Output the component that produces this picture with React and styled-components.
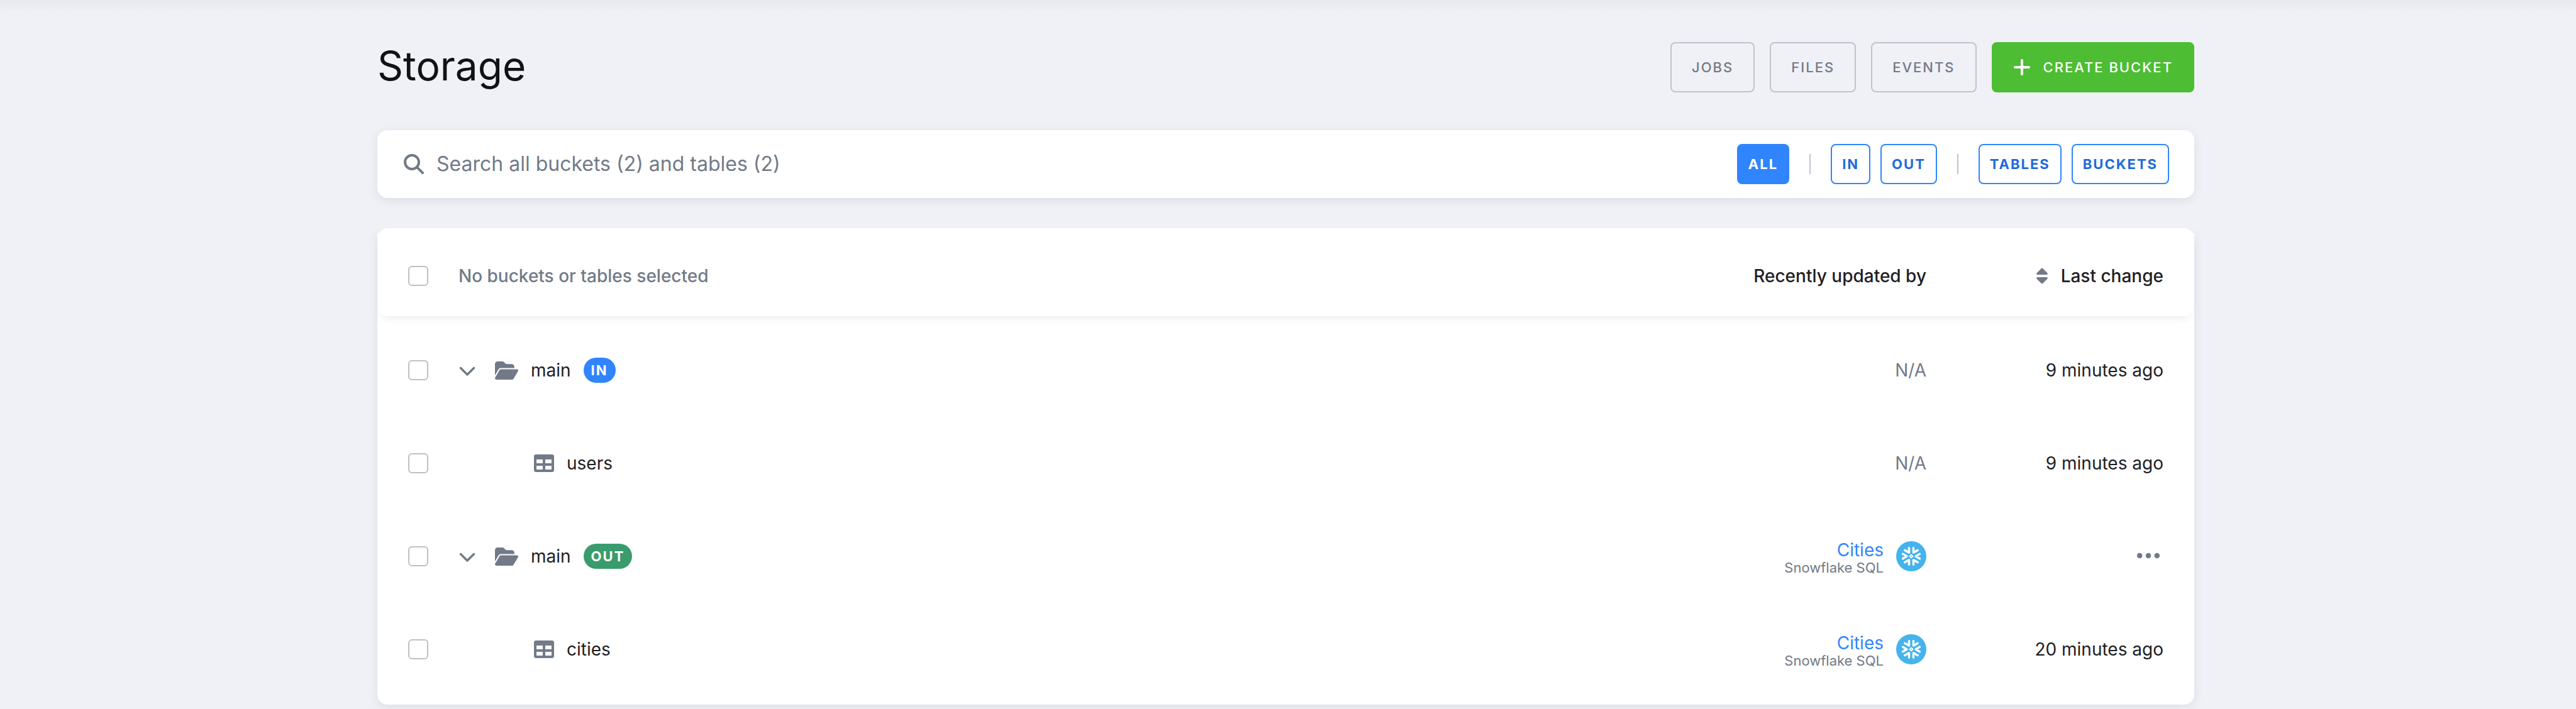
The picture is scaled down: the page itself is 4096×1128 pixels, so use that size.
import React, { useState } from "react";
import styled, { createGlobalStyle, css } from "styled-components";
import { FaSort, FaTable } from "react-icons/fa";
import { FaChevronDown, FaFolderOpen, FaMagnifyingGlass, FaPlus } from "react-icons/fa6";

const color = {
  page: "#f0f1f6",
  surface: "#ffffff",
  text: "#1e2024",
  heading: "#111214",
  muted: "#727a88",
  border: "#bdc3cf",
  checkbox: "#c0c0c0",
  blue: "#3085fc",
  blueDark: "#1f6bd9",
  green: "#4dbd33",
  greenBadge: "#3a9c6d",
  snowflake: "#45b3ec",
};

const GlobalStyle = createGlobalStyle`
  *, *::before, *::after { box-sizing: border-box; }
  body {
    margin: 0;
    background: ${color.page};
    color: ${color.text};
    font-family: Inter, "Liberation Sans", sans-serif;
    font-size: 28px;
    line-height: 40px;
  }
  button, input { font: inherit; }
`;

const Page = styled.div`
  min-height: 100vh;
  padding: 67px 7px 7px 0;
  background: linear-gradient(#e7e8ed, ${color.page} 20px);
`;

const Container = styled.main`
  max-width: 2889px;
  margin: 0 auto;
`;

const Header = styled.header`
  display: flex;
  align-items: flex-start;
  justify-content: space-between;
  margin-bottom: 60px;
`;

const Title = styled.h1`
  margin: 0;
  color: ${color.heading};
  font-size: 64px;
  font-weight: 400;
  line-height: 76px;
`;

const Actions = styled.div`
  display: flex;
  gap: 24px;
`;

const ActionButton = styled.button`
  display: flex;
  align-items: center;
  gap: 20px;
  height: 80px;
  padding: 0 32px;
  border: 2px solid ${(p) => (p.$primary ? color.green : color.border)};
  border-radius: 8px;
  background: ${(p) => (p.$primary ? color.green : "transparent")};
  color: ${(p) => (p.$primary ? "#fff" : color.muted)};
  font-size: 22px;
  font-weight: 500;
  letter-spacing: 2px;
  text-transform: uppercase;
  cursor: pointer;

  svg {
    width: 28px;
    height: 32px;
  }
`;

const surface = css`
  background: ${color.surface};
  box-shadow: 0 4px 16px rgba(34, 64, 90, 0.1);
`;

const SearchBar = styled.section`
  ${surface}
  display: flex;
  align-items: center;
  gap: 20px;
  height: 108px;
  margin-bottom: 48px;
  padding: 0 40px 0 42px;
  border-radius: 16px;
`;

const SearchLabel = styled.label`
  display: flex;
  flex: 1;
  align-items: center;
  gap: 20px;
  color: ${color.muted};
`;

const SearchInput = styled.input`
  flex: 1;
  padding: 0;
  border: 0;
  outline: 0;
  background: none;
  color: ${color.text};
  font-size: 32px;
  line-height: 40px;

  &::placeholder {
    color: ${color.muted};
    opacity: 1;
  }
`;

const Filters = styled.div`
  display: flex;
  align-items: center;
  gap: 32px;
`;

const FilterGroup = styled.div`
  display: flex;
  gap: 16px;
`;

const FilterDivider = styled.span`
  width: 2px;
  height: 32px;
  background: ${color.border};
`;

const FilterButton = styled.button`
  height: 64px;
  padding: 0 16px;
  border: 2px solid ${color.blue};
  border-radius: 8px;
  background: ${(p) => (p.$active ? color.blue : color.surface)};
  color: ${(p) => (p.$active ? "#fff" : color.blueDark)};
  font-size: 22px;
  font-weight: 700;
  letter-spacing: 2px;
  text-transform: uppercase;
  cursor: pointer;
`;

const Panel = styled.section`
  ${surface}
  display: flow-root;
  margin-top: 56px;
  border-radius: 0 0 16px 16px;
`;

const Table = styled.table`
  display: block;
  margin-top: -8px;
`;

const TableHead = styled.thead`
  display: block;
`;

const TableBody = styled.tbody`
  display: block;
  padding: 12px 0 14px;
`;

const Row = styled.tr`
  display: grid;
  grid-template-columns: 80px 1fr auto 377px;
  align-items: center;
  height: 148px;
  padding: 0 49px;
`;

const HeadRow = styled(Row)`
  height: 140px;
  padding-top: 12px;
  border-radius: 16px;
  background: ${color.surface};
  box-shadow: 0 10px 14px -8px rgba(34, 64, 90, 0.12);
`;

const HeadCell = styled.th`
  display: flex;
  align-items: center;
  justify-content: ${(p) => (p.$right ? "flex-end" : "flex-start")};
  gap: 20px;
  padding: 0;
  color: ${(p) => (p.$muted ? color.muted : color.text)};
  font-weight: 500;
`;

const Cell = styled.td`
  display: flex;
  align-items: center;
  justify-content: ${(p) => (p.$right ? "flex-end" : "flex-start")};
  gap: 20px;
  padding: 0;
  color: ${(p) => (p.$muted ? color.muted : color.text)};
`;

const NameCell = styled(Cell)`
  padding-left: ${(p) => (p.$nested ? 120 : 0)}px;
  color: ${color.muted};
`;

const Name = styled.span`
  color: ${color.text};
`;

const Checkbox = styled.input`
  width: 32px;
  height: 32px;
  margin: 0;
  appearance: none;
  border: 2px solid ${color.checkbox};
  border-radius: 6px;
  background: ${color.surface};

  &:checked {
    border-color: ${color.blue};
    background: ${color.blue};
  }
`;

const IconButton = styled.button`
  display: flex;
  align-items: center;
  padding: 0;
  border: 0;
  background: none;
  color: ${color.muted};
  cursor: pointer;
`;

const ToggleButton = styled(IconButton)`
  margin-right: 10px;
`;

const SortButton = styled(IconButton)`
  gap: 14px;
  color: ${color.text};
  font-weight: 500;

  svg {
    color: ${color.muted};
  }
`;

const Badge = styled.span`
  padding: 0 12px;
  border-radius: 20px;
  background: ${(p) => (p.$stage === "out" ? color.greenBadge : color.blue)};
  color: #fff;
  font-size: 22px;
  font-weight: 700;
  letter-spacing: 2px;
  text-transform: uppercase;
`;

const Updater = styled.div`
  display: flex;
  flex-direction: column;
  align-items: flex-end;
  padding-top: 4px;
`;

const UpdaterLink = styled.a`
  color: ${color.blue};
  line-height: 32px;
  text-decoration: none;
`;

const UpdaterKind = styled.span`
  color: ${color.muted};
  font-size: 22px;
  line-height: 24px;
`;

const SnowflakeLogo = () => (
  <svg width="48" height="48" viewBox="0 0 180 180" fill="none" aria-hidden="true">
    <circle cx="90" cy="90" r="90" fill={color.snowflake} />
    <g stroke="#fff" strokeWidth="13" strokeLinecap="round" strokeLinejoin="round">
      <path d="M77 40v28L52 54M103 40v28l25-14M77 140v-28l-25 14M103 140v-28l25 14" />
      <path d="M40 76l23 14-23 14M140 76l-23 14 23 14" />
    </g>
    <path d="M90 81l9 9-9 9-9-9z" stroke="#fff" strokeWidth="7" strokeLinejoin="round" />
  </svg>
);

const DotsIcon = () => (
  <svg width="44" height="32" viewBox="0 0 44 32" fill="currentColor" aria-hidden="true">
    <circle cx="6.2" cy="15" r="4.3" />
    <circle cx="20" cy="15" r="4.3" />
    <circle cx="33.8" cy="15" r="4.3" />
  </svg>
);

const filterGroups = [["All"], ["In", "Out"], ["Tables", "Buckets"]];

const rows = [
  { id: "in-main", kind: "bucket", name: "main", stage: "in", changed: "9 minutes ago" },
  { id: "in-users", kind: "table", name: "users", changed: "9 minutes ago" },
  { id: "out-main", kind: "bucket", name: "main", stage: "out", updatedBy: "Cities" },
  { id: "out-cities", kind: "table", name: "cities", updatedBy: "Cities", changed: "20 minutes ago" },
];

function StorageRow({ row }) {
  const isBucket = row.kind === "bucket";
  return (
    <Row>
      <Cell>
        <Checkbox type="checkbox" aria-label={`Select ${row.kind} ${row.name}`} />
      </Cell>
      <NameCell $nested={!isBucket}>
        {isBucket ? (
          <>
            <ToggleButton aria-label={`Collapse ${row.name}`}>
              <FaChevronDown size={28} />
            </ToggleButton>
            <FaFolderOpen size={37} />
          </>
        ) : (
          <FaTable size={32} />
        )}
        <Name>{row.name}</Name>
        {row.stage && <Badge $stage={row.stage}>{row.stage}</Badge>}
      </NameCell>
      <Cell $right $muted>
        {row.updatedBy ? (
          <>
            <Updater>
              <UpdaterLink href="#cities">{row.updatedBy}</UpdaterLink>
              <UpdaterKind>Snowflake SQL</UpdaterKind>
            </Updater>
            <SnowflakeLogo />
          </>
        ) : (
          "N/A"
        )}
      </Cell>
      <Cell $right>
        {row.changed || (
          <IconButton aria-label="More actions">
            <DotsIcon />
          </IconButton>
        )}
      </Cell>
    </Row>
  );
}

export default function App() {
  const [active, setActive] = useState("All");
  return (
    <>
      <GlobalStyle />
      <Page>
        <Container>
          <Header>
            <Title>Storage</Title>
            <Actions>
              <ActionButton>Jobs</ActionButton>
              <ActionButton>Files</ActionButton>
              <ActionButton>Events</ActionButton>
              <ActionButton $primary>
                <FaPlus />
                Create bucket
              </ActionButton>
            </Actions>
          </Header>

          <SearchBar>
            <SearchLabel>
              <FaMagnifyingGlass size={32} />
              <SearchInput
                type="text"
                aria-label="Search buckets and tables"
                placeholder="Search all buckets (2) and tables (2)"
              />
            </SearchLabel>
            <Filters>
              {filterGroups.map((group, index) => (
                <React.Fragment key={group[0]}>
                  {index > 0 && <FilterDivider />}
                  <FilterGroup>
                    {group.map((name) => (
                      <FilterButton
                        key={name}
                        $active={active === name}
                        aria-pressed={active === name}
                        onClick={() => setActive(name)}
                      >
                        {name}
                      </FilterButton>
                    ))}
                  </FilterGroup>
                </React.Fragment>
              ))}
            </Filters>
          </SearchBar>

          <Panel>
            <Table>
              <TableHead>
                <HeadRow>
                  <HeadCell>
                    <Checkbox type="checkbox" aria-label="Select all" />
                  </HeadCell>
                  <HeadCell $muted>No buckets or tables selected</HeadCell>
                  <HeadCell $right>Recently updated by</HeadCell>
                  <HeadCell $right>
                    <SortButton>
                      <FaSort size={32} />
                      Last change
                    </SortButton>
                  </HeadCell>
                </HeadRow>
              </TableHead>
              <TableBody>
                {rows.map((row) => (
                  <StorageRow key={row.id} row={row} />
                ))}
              </TableBody>
            </Table>
          </Panel>
        </Container>
      </Page>
    </>
  );
}
